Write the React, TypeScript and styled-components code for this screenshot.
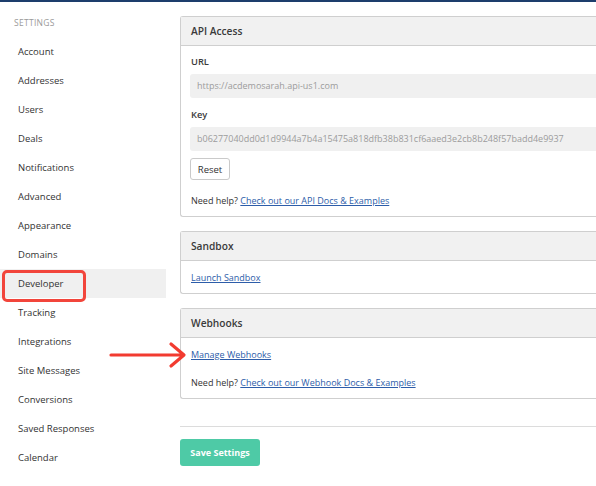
import styled, { createGlobalStyle } from "styled-components";

const GlobalStyle = createGlobalStyle`
  html, body {
    margin: 0;
    padding: 0;
    background: #fff;
    overflow: hidden;
    font-family: "Open Sans", "Liberation Sans", sans-serif;
    color: #333;
  }
`;

const navItems = [
  "Account",
  "Addresses",
  "Users",
  "Deals",
  "Notifications",
  "Advanced",
  "Appearance",
  "Domains",
  "Developer",
  "Tracking",
  "Integrations",
  "Site Messages",
  "Conversions",
  "Saved Responses",
  "Calendar",
];

const App = () => {
  return (
    <>
      <GlobalStyle />
      <Page>
        <Sidebar>
          <SideLabel>Settings</SideLabel>
          {navItems.map((item) => (
            <NavItem key={item} active={item === "Developer"}>
              {item}
              {item === "Developer" && <Callout />}
            </NavItem>
          ))}
        </Sidebar>
        <Main>
          <Panel>
            <PanelHeader>API Access</PanelHeader>
            <PanelBody>
              <FieldLabel>URL</FieldLabel>
              <Field>https://acdemosarah.api-us1.com</Field>
              <FieldLabel top={9}>Key</FieldLabel>
              <Field>b06277040dd0d1d9944a7b4a15475a818dfb38b831cf6aaed3e2cb8b248f57badd4e9937</Field>
              <ResetButton>Reset</ResetButton>
              <HelpLine top={13}>
                Need help? <TextLink>Check out our API Docs &amp; Examples</TextLink>
              </HelpLine>
            </PanelBody>
          </Panel>
          <Panel>
            <PanelHeader>Sandbox</PanelHeader>
            <PanelBody pt={9}>
              <HelpLine>
                <TextLink>Launch Sandbox</TextLink>
              </HelpLine>
            </PanelBody>
          </Panel>
          <Panel>
            <PanelHeader>Webhooks</PanelHeader>
            <PanelBody pt={9}>
              <HelpLine>
                <Arrow viewBox="0 0 80 28" width="80" height="28">
                  <path
                    d="M2 14 H74 M62 3 L75 14 L62 25"
                    fill="none"
                    stroke="#f23b30"
                    strokeWidth="3.2"
                    strokeLinecap="round"
                    strokeLinejoin="round"
                  />
                </Arrow>
                <TextLink>Manage Webhooks</TextLink>
              </HelpLine>
              <HelpLine top={12}>
                Need help? <TextLink>Check out our Webhook Docs &amp; Examples</TextLink>
              </HelpLine>
            </PanelBody>
          </Panel>
          <Divider />
          <SaveButton>Save Settings</SaveButton>
        </Main>
      </Page>
    </>
  );
};

export default App;

const Page = styled.div`
  display: flex;
  width: 596px;
  height: 486px;
  border-top: 2px solid #1d3d6c;
  box-sizing: border-box;
`;

const Sidebar = styled.nav`
  width: 166px;
  flex-shrink: 0;
  padding-top: 13px;
  display: flex;
  flex-direction: column;
`;

const SideLabel = styled.div`
  height: 16px;
  line-height: 16px;
  margin-bottom: 6px;
  padding-left: 14px;
  font-size: 8.5px;
  letter-spacing: 0.3px;
  text-transform: uppercase;
  color: #9a9a9a;
`;

const NavItem = styled.div<{ active?: boolean }>`
  position: relative;
  height: 29px;
  line-height: 29px;
  padding-left: 18px;
  font-size: 9.5px;
  color: #333;
  background: ${(p) => (p.active ? "#f0f0f0" : "transparent")};
`;

const Callout = styled.span`
  position: absolute;
  left: 2px;
  top: 1px;
  width: 84px;
  height: 32px;
  border: 3px solid #f2453b;
  border-radius: 5px;
  box-sizing: border-box;
`;

const Main = styled.main`
  flex: 1;
  padding: 14px 0 0 14px;
  display: flex;
  flex-direction: column;
  min-width: 470px;
`;

const Panel = styled.section`
  border: 1px solid #cfcfcf;
  border-right: none;
  border-radius: 3px 0 0 3px;
  margin-bottom: 14px;
`;

const PanelHeader = styled.div`
  height: 28px;
  line-height: 28px;
  padding-left: 10px;
  background: #f1f1f1;
  border-bottom: 1px solid #cfcfcf;
  font-size: 10.2px;
  font-weight: 600;
  color: #3a3a3a;
`;

const PanelBody = styled.div<{ pt?: number }>`
  padding: ${(p) => p.pt ?? 8}px 9px 7px;
`;

const FieldLabel = styled.div<{ top?: number }>`
  margin-top: ${(p) => p.top ?? 0}px;
  padding-left: 1px;
  line-height: 16px;
  font-size: 9.3px;
  font-weight: 600;
  color: #3a3a3a;
`;

const Field = styled.div`
  margin-top: 4px;
  height: 24px;
  line-height: 24px;
  padding-left: 7px;
  background: #f0f0f0;
  border-radius: 3px;
  font-size: 9px;
  color: #9c9c9c;
  white-space: nowrap;
`;

const ResetButton = styled.button`
  display: block;
  margin-top: 7px;
  width: 40px;
  height: 22px;
  padding: 0;
  background: #fff;
  border: 1px solid #cacaca;
  border-radius: 3px;
  font-family: inherit;
  font-size: 9.5px;
  color: #333;
`;

const HelpLine = styled.div<{ top?: number }>`
  position: relative;
  margin-top: ${(p) => p.top ?? 0}px;
  padding-left: 1px;
  line-height: 16px;
  font-size: 9px;
  color: #333;
`;

const TextLink = styled.a`
  color: #2d5da9;
  text-decoration: underline;
  cursor: pointer;
`;

const Arrow = styled.svg`
  position: absolute;
  left: -81px;
  top: -6px;
`;

const Divider = styled.hr`
  margin: 13px 0 0;
  border: none;
  border-top: 1px solid #dcdcdc;
`;

const SaveButton = styled.button`
  margin-top: 12px;
  width: 80px;
  height: 27px;
  padding: 0;
  background: #4ecaa6;
  border: none;
  border-radius: 3px;
  font-family: inherit;
  font-size: 9px;
  font-weight: 700;
  color: #fff;
`;
